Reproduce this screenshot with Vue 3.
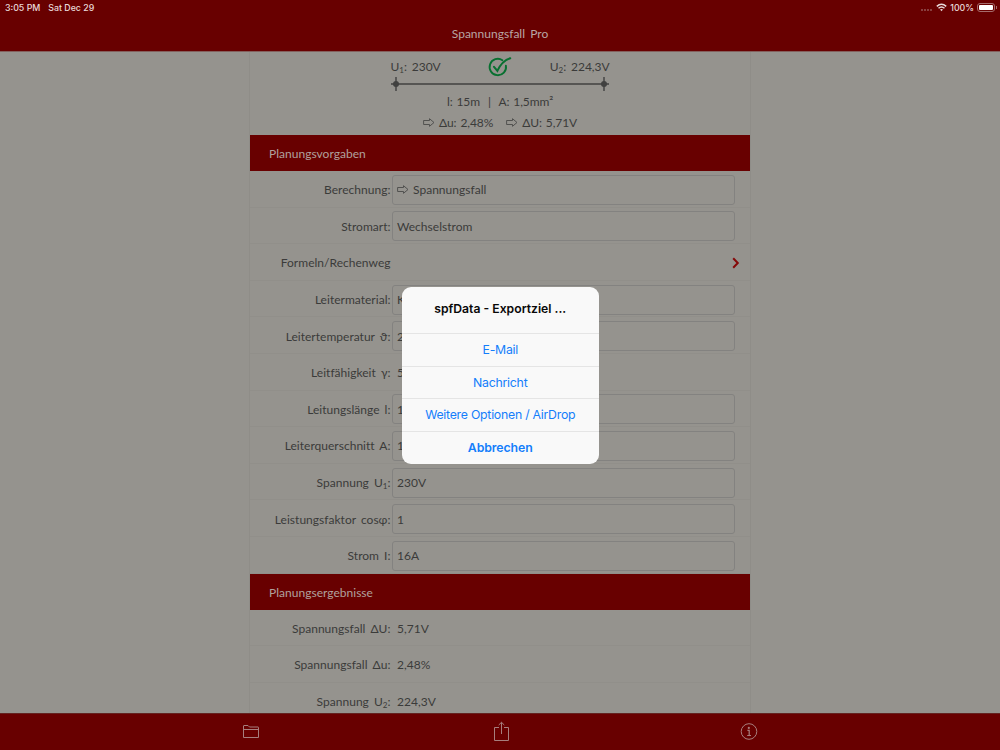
<template>
    <div class="screen">
        <header class="navbar">
            <div class="statusbar">
                <span class="time">3:05 PM</span>
                <span class="date">Sat Dec 29</span>
                <span class="signal"><i></i><i></i><i></i><i></i></span>
                <svg class="wifi" width="11" height="9" viewBox="0 0 11 9" fill="none" stroke="#e8dada" stroke-width="1.5">
                    <path d="M0.8 3.4 Q5.5 -0.9 10.2 3.4" />
                    <path d="M2.5 5.3 Q5.5 2.7 8.5 5.3" />
                    <path d="M4 6.5 Q5.5 5.6 7 6.5 L5.5 8.2 Z" fill="#e8dada" stroke="none" />
                </svg>
                <span class="percent">100%</span>
                <span class="battery"><i></i></span>
            </div>
            <h1>Spannungsfall Pro</h1>
        </header>

        <main class="panel">
            <div class="summary">
                <div class="voltages">
                    <span class="left">U<sub>1</sub>: 230V</span>
                    <svg width="26" height="22" viewBox="0 0 26 22" fill="none" stroke="#087030" stroke-linecap="round">
                        <path d="M15.4 4.2 A8.2 8.2 0 1 0 18.9 9.6" stroke-width="1.9" />
                        <path d="M7 10.8 L10.4 14.8 C13 9.3 17 4.2 23.3 2.2" stroke-width="2" />
                    </svg>
                    <span class="right">U<sub>2</sub>: 224,3V</span>
                </div>
                <svg class="wire" width="220" height="16" viewBox="0 0 220 16" stroke="#414140" fill="#414140">
                    <path d="M1 8 H219 M6 1 V15 M214 1 V15" stroke-width="1.4" />
                    <circle cx="6" cy="8" r="3" stroke="none" />
                    <circle cx="214" cy="8" r="3" stroke="none" />
                </svg>
                <div class="cable">l: 15m&nbsp; |&nbsp; A: 1,5mm²</div>
                <div class="drops">
                    <svg class="arrow" width="12" height="9" viewBox="0 0 12 9"><path d="M.6 2.5 H6.5 V.7 L11 4.5 L6.5 8.3 V6.5 H.6 Z" /></svg>
                    <span class="du">Δu: 2,48%</span>
                    <svg class="arrow" width="12" height="9" viewBox="0 0 12 9"><path d="M.6 2.5 H6.5 V.7 L11 4.5 L6.5 8.3 V6.5 H.6 Z" /></svg>
                    <span>ΔU: 5,71V</span>
                </div>
            </div>

            <h2>Planungsvorgaben</h2>
            <div v-for="row in inputs" :key="row.label" class="row">
                <label>{{ row.label }}<template v-if="row.sub"><sub>{{ row.sub }}</sub>:</template></label>
                <div v-if="row.plain" class="value">{{ row.value }}</div>
                <div v-else-if="row.link" class="link">
                    <svg width="8" height="12" viewBox="0 0 8 12" fill="none" stroke="#850909" stroke-width="2"><path d="M1.2 1.2 L5.8 6 L1.2 10.8" /></svg>
                </div>
                <div v-else class="field">
                    <svg v-if="row.arrow" class="arrow" width="12" height="9" viewBox="0 0 12 9"><path d="M.6 2.5 H6.5 V.7 L11 4.5 L6.5 8.3 V6.5 H.6 Z" /></svg>
                    {{ row.value }}
                </div>
            </div>

            <h2>Planungsergebnisse</h2>
            <div v-for="row in results" :key="row.label" class="row">
                <label>{{ row.label }}<template v-if="row.sub"><sub>{{ row.sub }}</sub>:</template></label>
                <div class="value">{{ row.value }}</div>
            </div>
        </main>

        <footer class="toolbar">
            <svg width="18" height="16" viewBox="0 0 18 16">
                <path d="M1.5 13.5 V2 Q1.5 1.5 2 1.5 H6 L7.5 3 H16 Q16.5 3 16.5 3.5 V13.5 Z M1.5 5.5 H16.5" />
            </svg>
            <svg class="share" width="18" height="22" viewBox="0 0 18 22">
                <path d="M6 6.5 H1.5 V19.5 H15.5 V6.5 H11 M8.5 13 V1.3 M5.7 4 L8.5 1.3 L11.3 4" />
            </svg>
            <svg width="18" height="18" viewBox="0 0 18 18">
                <circle cx="9" cy="8.5" r="7.8" />
                <circle class="dot" cx="8.8" cy="4.9" r="1.1" />
                <path d="M7.4 7.3 H9.2 V12.5 M7.2 12.5 H11" stroke-width="1.2" />
            </svg>
        </footer>

        <div class="dialog">
            <div class="title">spfData - Exportziel ...</div>
            <button v-for="action in actions" :key="action">{{ action }}</button>
            <button class="cancel">Abbrechen</button>
        </div>
    </div>
</template>

<script setup>
const inputs = [
    { label: 'Berechnung:', value: 'Spannungsfall', arrow: true },
    { label: 'Stromart:', value: 'Wechselstrom' },
    { label: 'Formeln/Rechenweg', link: true },
    { label: 'Leitermaterial:', value: 'Kupfer' },
    { label: 'Leitertemperatur ϑ:', value: '20°C' },
    { label: 'Leitfähigkeit γ:', value: '56', plain: true },
    { label: 'Leitungslänge l:', value: '15m' },
    { label: 'Leiterquerschnitt A:', value: '1,5mm²' },
    { label: 'Spannung U', sub: '1', value: '230V' },
    { label: 'Leistungsfaktor cosφ:', value: '1' },
    { label: 'Strom I:', value: '16A' }
];

const results = [
    { label: 'Spannungsfall ΔU:', value: '5,71V' },
    { label: 'Spannungsfall Δu:', value: '2,48%' },
    { label: 'Spannung U', sub: '2', value: '224,3V' }
];

const actions = ['E-Mail', 'Nachricht', 'Weitere Optionen / AirDrop'];
</script>

<style>
body {
    margin: 0;
    overflow: hidden;
}
</style>

<style scoped>
.screen {
    position: relative;
    display: flex;
    flex-direction: column;
    width: 1000px;
    height: 750px;
    overflow: hidden;
    background: #95938e;
    color: #3b3b3a;
    font-family: Lato, "Noto Sans", sans-serif;
    font-size: 12px;
    letter-spacing: 0.02px;
    word-spacing: 2px;
}
.navbar {
    flex: none;
    box-sizing: border-box;
    height: 52px;
    background: #680000;
    border-bottom: 1px solid #84605d;
    color: #b9a5a4;
}
.statusbar {
    display: flex;
    align-items: center;
    height: 15px;
    padding: 0 5px;
    font-family: Inter, "Liberation Sans", sans-serif;
    font-size: 8.8px;
    font-weight: 500;
    letter-spacing: 0;
    word-spacing: 0;
    color: #e8dada;
}
.date {
    margin-left: 8px;
}
.signal {
    display: flex;
    gap: 1px;
    margin: 5px 4px 0 auto;
}
.signal i {
    width: 2px;
    height: 2px;
    border-radius: 1px;
    background: #935454;
}
.percent {
    margin: 0 3px;
}
.battery {
    position: relative;
    box-sizing: border-box;
    width: 18px;
    height: 9px;
    padding: 1px;
    border: 1px solid #a56b6b;
    border-radius: 3px;
}
.battery i {
    display: block;
    height: 5px;
    border-radius: 1px;
    background: #fff;
}
.battery::after {
    content: "";
    position: absolute;
    right: -3px;
    top: 2px;
    width: 1px;
    height: 3px;
    background: #a56b6b;
}
h1 {
    margin: 0;
    font-size: 12px;
    font-weight: 400;
    line-height: 38px;
    text-align: center;
}
.panel {
    flex: 1;
    min-height: 0;
    box-sizing: border-box;
    width: 502px;
    margin: 0 auto;
    overflow: hidden;
    border: solid #8f8d88;
    border-width: 0 1px;
}
.summary {
    display: flex;
    flex-direction: column;
    align-items: center;
    height: 83px;
}
.voltages {
    display: flex;
    justify-content: space-between;
    width: 219px;
    height: 24px;
    line-height: 30px;
}
.voltages svg {
    margin: 4px 0 0 9px;
}
.voltages .right,
.voltages .left {
    letter-spacing: -0.05px;
}
.wire {
    flex: none;
}
sub {
    font-size: 8px;
    line-height: 0;
    vertical-align: -2px;
}
.cable {
    height: 20px;
    line-height: 20px;
    letter-spacing: -0.1px;
    word-spacing: 1px;
}
.drops {
    display: flex;
    align-items: center;
    height: 21px;
    letter-spacing: -0.1px;
    word-spacing: 1px;
}
.arrow {
    flex: none;
    margin-right: 4px;
    fill: none;
    stroke: #4b4b49;
    stroke-width: 0.9;
}
.du {
    margin-right: 13px;
}
h2 {
    height: 36px;
    margin: 0;
    padding-left: 19px;
    background: #680000;
    color: #b0a09d;
    font-size: 12px;
    font-weight: 400;
    line-height: 38px;
}
.row {
    display: flex;
    align-items: center;
    box-sizing: border-box;
    height: 36.6px;
    padding: 2px 15px 0 0;
    border-bottom: 1px solid #918f8a;
}
label {
    width: 140.5px;
    margin-right: 1.5px;
    text-align: right;
    white-space: nowrap;
}
.field {
    display: flex;
    flex: 1;
    align-items: center;
    box-sizing: border-box;
    height: 30px;
    padding-left: 4px;
    border: 1px solid #838280;
    border-radius: 3px;
}
.value {
    padding-left: 5px;
}
.link {
    display: flex;
    flex: 1;
    justify-content: flex-end;
    margin-right: -5px;
}
.toolbar {
    display: flex;
    flex: none;
    align-items: center;
    justify-content: space-between;
    box-sizing: border-box;
    height: 37px;
    padding: 0 242px;
    border-top: 1px solid #642220;
    background: #680000;
}
.toolbar svg {
    fill: none;
    stroke: #a77e7d;
    stroke-width: 1;
}
.toolbar .share {
    margin-left: 4px;
}
.toolbar .dot {
    fill: #a77e7d;
    stroke: none;
}
.dialog {
    position: absolute;
    top: 286.5px;
    left: 401.5px;
    width: 197.5px;
    height: 177px;
    overflow: hidden;
    border-radius: 9px;
    background: #f9f9f9;
    font-family: Inter, "Liberation Sans", sans-serif;
    letter-spacing: 0;
    word-spacing: 0;
    text-align: center;
}
.title {
    height: 46.5px;
    color: #080808;
    font-size: 12.2px;
    font-weight: 600;
    line-height: 44px;
}
button {
    display: block;
    box-sizing: border-box;
    width: 100%;
    height: 32.6px;
    padding: 0;
    border: 0;
    border-top: 1px solid #e5e5e5;
    background: none;
    color: #147efb;
    font: 12.3px/32px Inter, "Liberation Sans", sans-serif;
    letter-spacing: -0.25px;
}
.cancel {
    font-weight: 600;
    letter-spacing: -0.1px;
}
</style>
